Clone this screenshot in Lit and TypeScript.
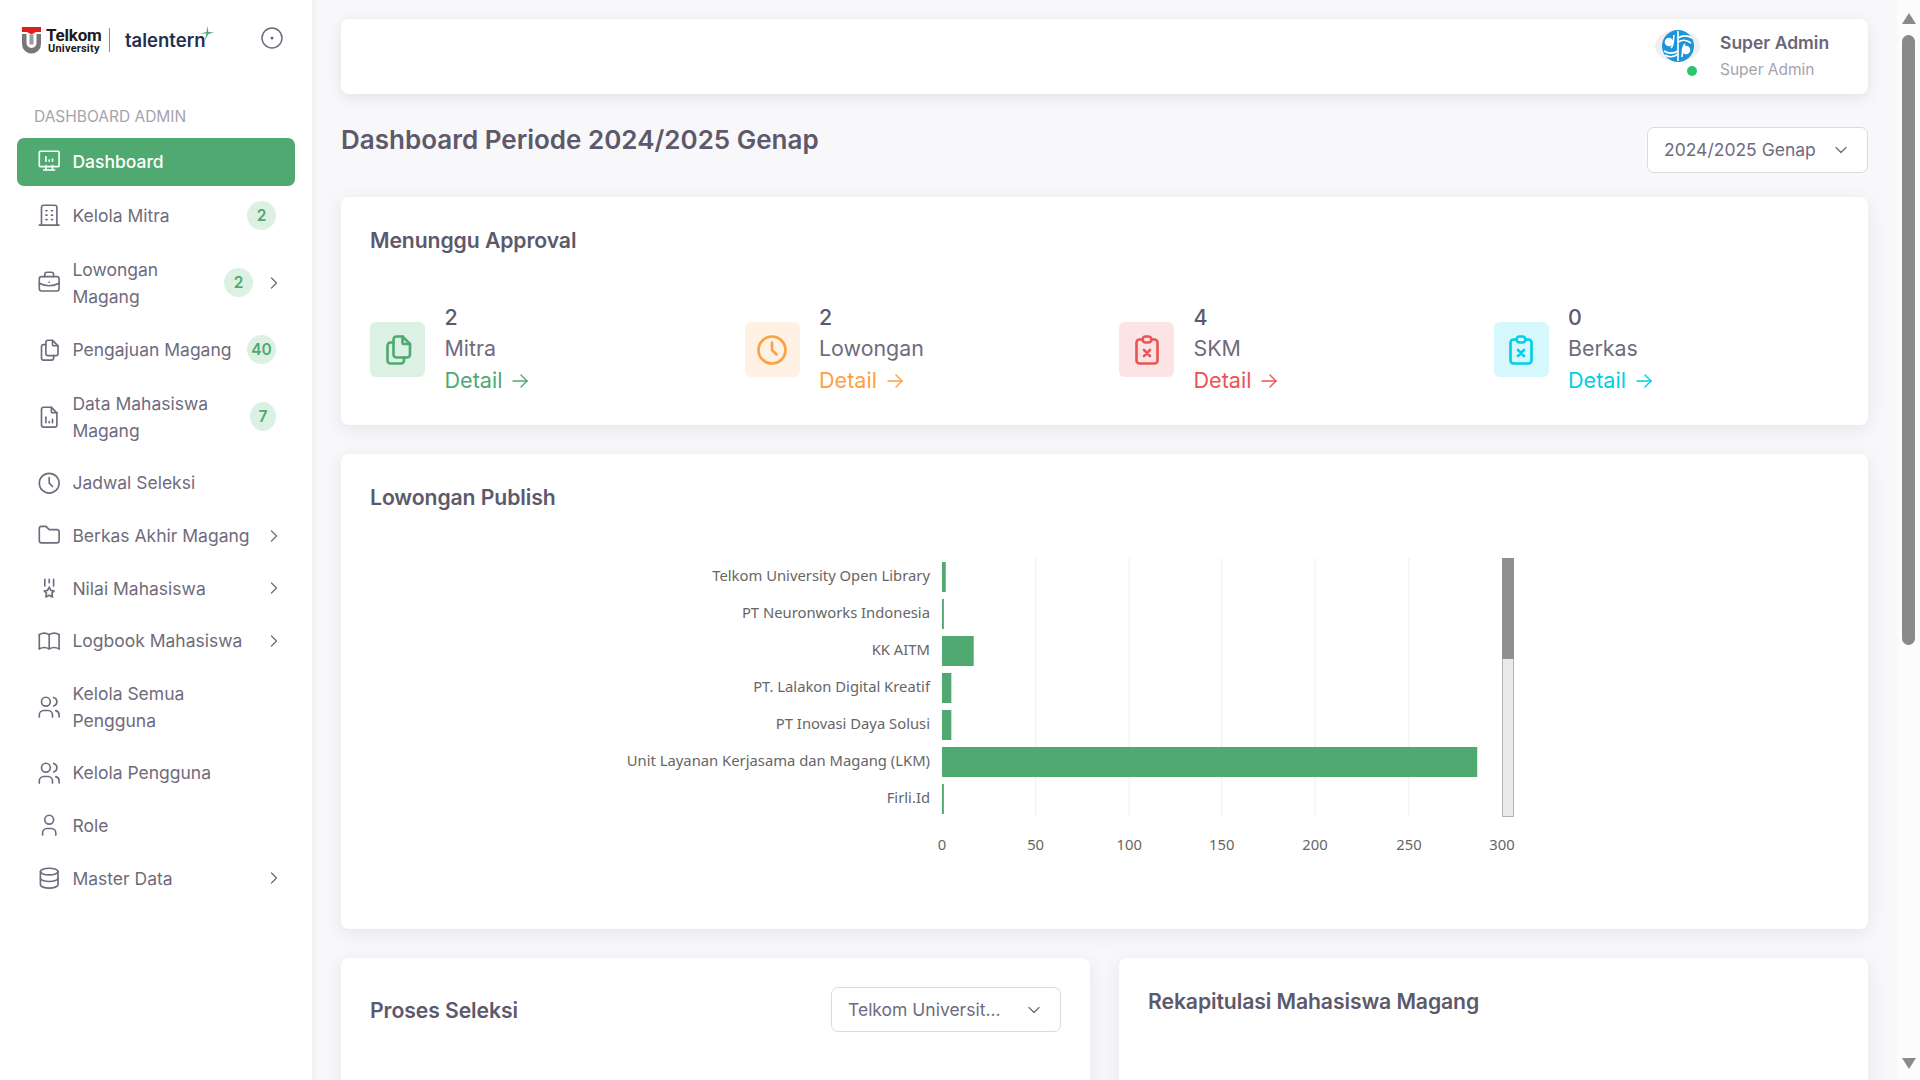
import { LitElement, html, css, svg } from "lit";
import { customElement } from "lit/decorators.js";

const I: Record<string, string[]> = {
  desk: ["M3 4a1 1 0 0 1 1 -1h16a1 1 0 0 1 1 1v12a1 1 0 0 1 -1 1h-16a1 1 0 0 1 -1 -1z", "M7 20h10", "M9 16v4", "M15 16v4", "M9 12v-4", "M12 12v-1", "M15 12v-2"],
  building: ["M3 21l18 0", "M9 8l1 0", "M9 12l1 0", "M9 16l1 0", "M14 8l1 0", "M14 12l1 0", "M14 16l1 0", "M5 21v-16a2 2 0 0 1 2 -2h10a2 2 0 0 1 2 2v16"],
  brief: ["M3 9a2 2 0 0 1 2 -2h14a2 2 0 0 1 2 2v9a2 2 0 0 1 -2 2h-14a2 2 0 0 1 -2 -2z", "M8 7v-2a2 2 0 0 1 2 -2h4a2 2 0 0 1 2 2v2", "M12 12l0 .01", "M3 13a20 20 0 0 0 18 0"],
  files: ["M15 3v4a1 1 0 0 0 1 1h4", "M18 17h-7a2 2 0 0 1 -2 -2v-10a2 2 0 0 1 2 -2h4l5 5v7a2 2 0 0 1 -2 2z", "M16 17v2a2 2 0 0 1 -2 2h-7a2 2 0 0 1 -2 -2v-10a2 2 0 0 1 2 -2h2"],
  fileChart: ["M14 3v4a1 1 0 0 0 1 1h4", "M17 21h-10a2 2 0 0 1 -2 -2v-14a2 2 0 0 1 2 -2h7l5 5v11a2 2 0 0 1 -2 2z", "M9 17l0 -5", "M12 17l0 -1", "M15 17l0 -3"],
  clock: ["M3 12a9 9 0 1 0 18 0a9 9 0 0 0 -18 0", "M12 7v5l3 3"],
  folder: ["M5 4h4l3 3h7a2 2 0 0 1 2 2v8a2 2 0 0 1 -2 2h-14a2 2 0 0 1 -2 -2v-11a2 2 0 0 1 2 -2"],
  medal: ["M12 4v3m-4 -3v6m8 -6v6", "M12 18.5l-3 1.5l.5 -3.5l-2 -2l3 -.5l1.5 -3l1.5 3l3 .5l-2 2l.5 3.5z"],
  book: ["M3 19a9 9 0 0 1 9 0a9 9 0 0 1 9 0", "M3 6a9 9 0 0 1 9 0a9 9 0 0 1 9 0", "M3 6l0 13", "M12 6l0 13", "M21 6l0 13"],
  users: ["M5 7a4 4 0 1 0 8 0a4 4 0 1 0 -8 0", "M3 21v-2a4 4 0 0 1 4 -4h4a4 4 0 0 1 4 4v2", "M16 3.13a4 4 0 0 1 0 7.75", "M21 21v-2a4 4 0 0 0 -3 -3.85"],
  user: ["M8 7a4 4 0 1 0 8 0a4 4 0 0 0 -8 0", "M6 21v-2a4 4 0 0 1 4 -4h4a4 4 0 0 1 4 4v2"],
  db: ["M4 6a8 3 0 1 0 16 0a8 3 0 1 0 -16 0", "M4 6v6a8 3 0 0 0 16 0v-6", "M4 12v6a8 3 0 0 0 16 0v-6"],
  right: ["M9 6l6 6l-6 6"],
  down: ["M6 9l6 6l6 -6"],
  arrow: ["M5 12l14 0", "M13 18l6 -6", "M13 6l6 6"],
  clipX: ["M9 5h-2a2 2 0 0 0 -2 2v12a2 2 0 0 0 2 2h10a2 2 0 0 0 2 -2v-12a2 2 0 0 0 -2 -2h-2", "M9 5a2 2 0 0 1 2 -2h2a2 2 0 0 1 2 2v0a2 2 0 0 1 -2 2h-2a2 2 0 0 1 -2 -2z", "M10 12l4 4m0 -4l-4 4"],
};

const icon = (name: string, cls = "ico") => html`<svg class=${cls} viewBox="0 0 24 24" fill="none" stroke="currentColor" stroke-linecap="round" stroke-linejoin="round">${I[name].map((d) => svg`<path d=${d}></path>`)}</svg>`;

interface NavItem { icon: string; label: string[]; badge?: string; chev?: boolean; active?: boolean; narrow?: boolean }
const NAV: NavItem[] = [
  { icon: "desk", label: ["Dashboard"], active: true },
  { icon: "building", label: ["Kelola Mitra"], badge: "2" },
  { icon: "brief", label: ["Lowongan", "Magang"], badge: "2", chev: true },
  { icon: "files", label: ["Pengajuan Magang"], badge: "40" },
  { icon: "fileChart", label: ["Data Mahasiswa", "Magang"], badge: "7", narrow: true },
  { icon: "clock", label: ["Jadwal Seleksi"] },
  { icon: "folder", label: ["Berkas Akhir Magang"], chev: true },
  { icon: "medal", label: ["Nilai Mahasiswa"], chev: true },
  { icon: "book", label: ["Logbook Mahasiswa"], chev: true },
  { icon: "users", label: ["Kelola Semua", "Pengguna"] },
  { icon: "users", label: ["Kelola Pengguna"] },
  { icon: "user", label: ["Role"] },
  { icon: "db", label: ["Master Data"], chev: true },
];

const STATS = [
  { n: "2", label: "Mitra", icon: "files", tone: "green" },
  { n: "2", label: "Lowongan", icon: "clock", tone: "orange" },
  { n: "4", label: "SKM", icon: "clipX", tone: "red" },
  { n: "0", label: "Berkas", icon: "clipX", tone: "cyan" },
];

const BARS: [string, number][] = [
  ["Telkom University Open Library", 2],
  ["PT Neuronworks Indonesia", 1],
  ["KK AITM", 17],
  ["PT. Lalakon Digital Kreatif", 5],
  ["PT Inovasi Daya Solusi", 5],
  ["Unit Layanan Kerjasama dan Magang (LKM)", 287],
  ["Firli.Id", 1],
];

@customElement("app-root")
export class AppRoot extends LitElement {
  static styles = css`
    :host { display: block; font-family: "Inter", "Liberation Sans", sans-serif; color: #6f6b7d; }
    * { box-sizing: border-box; }
    .shell { display: flex; width: 100%; height: 100vh; overflow: hidden; background: #f8f7fa; }

    .side { flex: 0 0 312px; background: #fff; box-shadow: 0 0 8px rgba(75,70,92,.08); z-index: 1; }
    .brand { height: 76px; display: flex; align-items: center; padding: 4px 28px 0 22px; }
    .mark { width: 19px; height: 27px; margin-right: 5px; flex: none; }
    .tu { display: flex; flex-direction: column; color: #1b1b1b; font-family: "Roboto", "Liberation Sans", sans-serif; font-weight: 700; width: 54px; }
    .tu b { font-size: 17px; line-height: 16px; letter-spacing: -.2px; font-weight: 700; }
    .tu span { font-size: 11px; line-height: 11px; margin-left: 2px; letter-spacing: .2px; }
    .vr { width: 1px; height: 24px; background: #8a8a8a; margin: 0 15px 0 9px; }
    .tal { position: relative; font-size: 18.5px; font-weight: 600; letter-spacing: 0; color: #1f2f52; line-height: 24px; }
    .star { position: absolute; right: -9px; top: -2px; width: 15px; height: 15px; }
    .toggle { width: 24px; height: 24px; margin-left: auto; color: #6f6b7d; margin-top: -4px; }
    .sec { margin: 30px 0 10px 34px; font-size: 15.5px; line-height: 22px; color: #a5a3ae; letter-spacing: 0; }
    .nav { margin: 0 17px; display: flex; flex-direction: column; gap: 4.6px; }
    .item { display: flex; align-items: center; min-height: 48px; padding: 0 19px; border-radius: 7px; font-size: 17.5px; line-height: 27px; color: #6f6b7d; }
    .item.b1 { min-height: 50px; }
    .item.tall { min-height: 75px; }
    .item.active { background: #4fa971; color: #fff; font-weight: 500; padding-bottom: 1px; }
    .ico { width: 26.4px; height: 26.4px; stroke-width: 1.5; flex: none; margin-right: 10px; }
    .lbl { white-space: nowrap; flex: 1; }
    .lbl span { display: block; }
    .badge { flex: none; width: 29px; height: 29px; border-radius: 50%; background: #dcf1e3; color: #4fa971; font-size: 15.5px; font-weight: 600; display: flex; align-items: center; justify-content: center; }
    .badge.narrow { width: 26px; }
    .chev { width: 20px; height: 20px; flex: none; stroke-width: 1.5; margin: 0 -8px 0 11px; }

    .main { flex: 1; min-width: 0; padding: 19px 29px 0; }
    .top { height: 75px; background: #fff; border-radius: 8px; box-shadow: 0 4px 14px rgba(75,70,92,.12); display: flex; align-items: center; justify-content: flex-end; padding-right: 39px; }
    .avatar { position: relative; width: 45px; height: 48px; margin-right: 20px; }
    .avatar svg { display: block; width: 45px; height: 32px; margin-top: -2.5px; }
    .dot { position: absolute; right: 3px; bottom: 4.5px; width: 10px; height: 10px; border-radius: 50%; background: #28c76f; }
    .who { width: 109px; margin-top: -2px; }
    .who b { display: block; font-size: 17.5px; font-weight: 600; color: #6a6679; line-height: 26px; white-space: nowrap; }
    .who span { display: block; font-size: 15.5px; color: #a5a3ae; line-height: 24px; margin-top: 2px; white-space: nowrap; }

    .headrow { display: flex; justify-content: space-between; align-items: flex-start; margin: 33px 0 24px; }
    h1 { margin: 0; font-size: 26px; line-height: 26px; font-weight: 600; color: #5d596c; letter-spacing: 0; }
    .sel { height: 46px; border: 1px solid #dbdade; border-radius: 7px; background: #fff; display: flex; align-items: center; justify-content: space-between; padding: 0 16px 1px 16px; font-size: 17.5px; color: #6f6b7d; white-space: nowrap; }
    .sel svg { width: 20px; height: 20px; stroke-width: 1.5; }
    .sel.year { width: 221px; }
    .sel.uni { width: 230px; height: 45px; padding-bottom: 0; }

    .card { background: #fff; border-radius: 8px; box-shadow: 0 4px 18px rgba(75,70,92,.1); margin-bottom: 29px; padding: 29px 0 0 29px; }
    h2 { margin: 0; font-size: 21.2px; line-height: 28px; font-weight: 600; color: #5d596c; letter-spacing: -.1px; }
    .approval { height: 228px; }
    .stats { display: grid; grid-template-columns: repeat(4, 1fr); margin-top: 48px; }
    .stat { display: flex; align-items: center; gap: 19.5px; }
    .box { width: 55px; height: 55px; border-radius: 6px; display: flex; align-items: center; justify-content: center; }
    .box svg { width: 36px; height: 36px; stroke-width: 1.75; }
    .stat .t { font-size: 21.4px; line-height: 31px; }
    .stat .n { font-weight: 500; color: #5d596c; }
    .stat .d { display: flex; align-items: center; gap: 6px; font-size: 21.6px; line-height: 33px; }
    .stat .d svg { width: 24px; height: 24px; stroke-width: 1.4; }
    .green .box { background: #dcf1e3; } .green .box, .green .d { color: #4fa971; }
    .orange .box { background: #fff1e3; } .orange .box, .orange .d { color: #ff9f43; }
    .red .box { background: #fce4e4; } .red .box, .red .d { color: #ea5455; }
    .cyan .box { background: #d6f7fb; } .cyan .box, .cyan .d { color: #00cfe8; }

    .pub { height: 475px; }
    .chart { display: block; width: 1498px; height: 418px; font-family: "Noto Sans", "Open Sans", sans-serif; font-size: 14.8px; }
    .chart text { fill: #666; }

    .two { display: grid; grid-template-columns: 1fr 1fr; gap: 29px; }
    .two .card { height: 300px; margin: 0; }
    .rowhead { display: flex; align-items: center; justify-content: space-between; padding-right: 29px; }

    .rail { flex: 0 0 23px; background: #fcfcfc; display: flex; flex-direction: column; align-items: center; padding: 13px 0 11px; }
    .up, .dn { width: 14px; height: 11px; flex: none; fill: #8a8a8a; }
    .thumb { width: 13px; height: 610px; margin-top: 11px; border-radius: 7px; background: #8a8a8a; flex: none; }
    .dn { margin-top: auto; }
  `;

  private renderChart() {
    const X0 = 572, Y0 = 47, UNIT = 1.865, ROW = 37;
    const ticks = [0, 50, 100, 150, 200, 250, 300];
    const tx = [572, 665.6, 759.3, 851.7, 945, 1039, 1132];
    return svg`<svg class="chart" viewBox="0 0 1498 418" role="img">
      ${ticks.slice(1, 6).map((_, i) => svg`<line x1=${tx[i + 1]} x2=${tx[i + 1]} y1=${Y0} y2=${Y0 + 259} stroke="#f1f1f3" stroke-width="1.2"></line>`)}
      ${BARS.map(([name, v], i) => svg`
        <rect x=${X0} y=${Y0 + i * ROW + 4} width=${Math.max(v * UNIT, 1.6)} height="30" fill="#4fa971"></rect>
        <text x="560" y=${Y0 + i * ROW + 19.5} text-anchor="end" dominant-baseline="middle">${name}</text>`)}
      ${ticks.map((t, i) => svg`<text x=${tx[i]} y="335.5" text-anchor="middle" dominant-baseline="middle">${t}</text>`)}
      <rect x="1132.5" y="47.5" width="11" height="258" fill="#e9e9e9" stroke="#b2b2b2"></rect>
      <rect x="1132" y="47" width="12" height="101" fill="#8f8f8f"></rect>
    </svg>`;
  }

  render() {
    return html`<div class="shell">
      <aside class="side">
        <div class="brand">
          <svg class="mark" viewBox="0 0 19 27">
            <path d="M0 0h19v5h-5l-4.500 2.500L5 5H0z" fill="#e0201f"></path>
            <path d="M0 7h4.500v9a5 5 0 0 0 10 0V7H19v10a9.500 9.500 0 0 1-19 0z" fill="#77777a"></path>
            <rect x="7.500" y="7.500" width="4" height="10" fill="#9b9b9e"></rect>
          </svg>
          <div class="tu"><b>Telkom</b><span>University</span></div>
          <div class="vr"></div>
          <div class="tal">talentern
            <svg class="star" viewBox="0 0 16 16"><path d="M9 0l1 6.500L16 7l-6 1.500L6 16l2-8L1 8l7-1.500z" fill="#4fa971"></path></svg>
          </div>
          <svg class="toggle" viewBox="0 0 24 24" fill="none" stroke="currentColor" stroke-width="1.5"><circle cx="12" cy="12" r="10"></circle><circle cx="12" cy="12" r="1.500" fill="currentColor" stroke="none"></circle></svg>
        </div>
        <div class="sec">DASHBOARD ADMIN</div>
        <nav class="nav">
          ${NAV.map((n) => html`<div class="item ${n.active ? "active" : ""} ${n.badge && n.label.length === 1 ? "b1" : ""} ${n.label.length > 1 ? "tall" : ""}">
            ${icon(n.icon)}
            <div class="lbl">${n.label.map((l) => html`<span>${l}</span>`)}</div>
            ${n.badge ? html`<div class="badge ${n.narrow ? "narrow" : ""}">${n.badge}</div>` : ""}
            ${n.chev ? icon("right", "chev") : ""}
          </div>`)}
        </nav>
      </aside>

      <main class="main">
        <header class="top">
          <div class="avatar">
            <svg viewBox="0 0 45 32">
              <ellipse cx="22.500" cy="16" rx="22.500" ry="16" fill="#efefef"></ellipse>
              <circle cx="23" cy="16" r="16" fill="#1c94d8"></circle>
              <g fill="none" stroke="#fff" stroke-width="1.600">
                <path d="M23 1v30"></path>
                <path d="M9 21c5 3 9 3 14 0"></path>
                <path d="M10 25c5 3 9 2 13-1"></path>
                <path d="M23 8c5-3 9-3 14 0"></path>
                <path d="M23 12c5-3 9-2 13 1"></path>
                <circle cx="14" cy="12" r="3.500" fill="#fff"></circle>
                <circle cx="31" cy="20" r="3.500" fill="#fff"></circle>
                <path d="M19 5c-1 7 0 10-3 13"></path>
                <path d="M27 27c1-7 0-10 3-13"></path>
              </g>
            </svg>
            <span class="dot"></span>
          </div>
          <div class="who"><b>Super Admin</b><span>Super Admin</span></div>
        </header>

        <div class="headrow">
          <h1>Dashboard Periode 2024/2025 Genap</h1>
          <div class="sel year">2024/2025 Genap ${icon("down", "")}</div>
        </div>

        <section class="card approval">
          <h2>Menunggu Approval</h2>
          <div class="stats">
            ${STATS.map((s) => html`<div class="stat ${s.tone}">
              <div class="box">${icon(s.icon, "")}</div>
              <div class="t">
                <div class="n">${s.n}</div>
                <div>${s.label}</div>
                <div class="d">Detail ${icon("arrow", "")}</div>
              </div>
            </div>`)}
          </div>
        </section>

        <section class="card pub">
          <h2>Lowongan Publish</h2>
          ${this.renderChart()}
        </section>

        <div class="two">
          <section class="card">
            <div class="rowhead">
              <h2>Proses Seleksi</h2>
              <div class="sel uni">Telkom Universit... ${icon("down", "")}</div>
            </div>
          </section>
          <section class="card"><h2>Rekapitulasi Mahasiswa Magang</h2></section>
        </div>
      </main>

      <div class="rail">
        <svg class="up" viewBox="0 0 14 11"><path d="M7 0l7 11H0z"></path></svg>
        <div class="thumb"></div>
        <svg class="dn" viewBox="0 0 14 11"><path d="M0 0h14L7 11z"></path></svg>
      </div>
    </div>`;
  }
}
